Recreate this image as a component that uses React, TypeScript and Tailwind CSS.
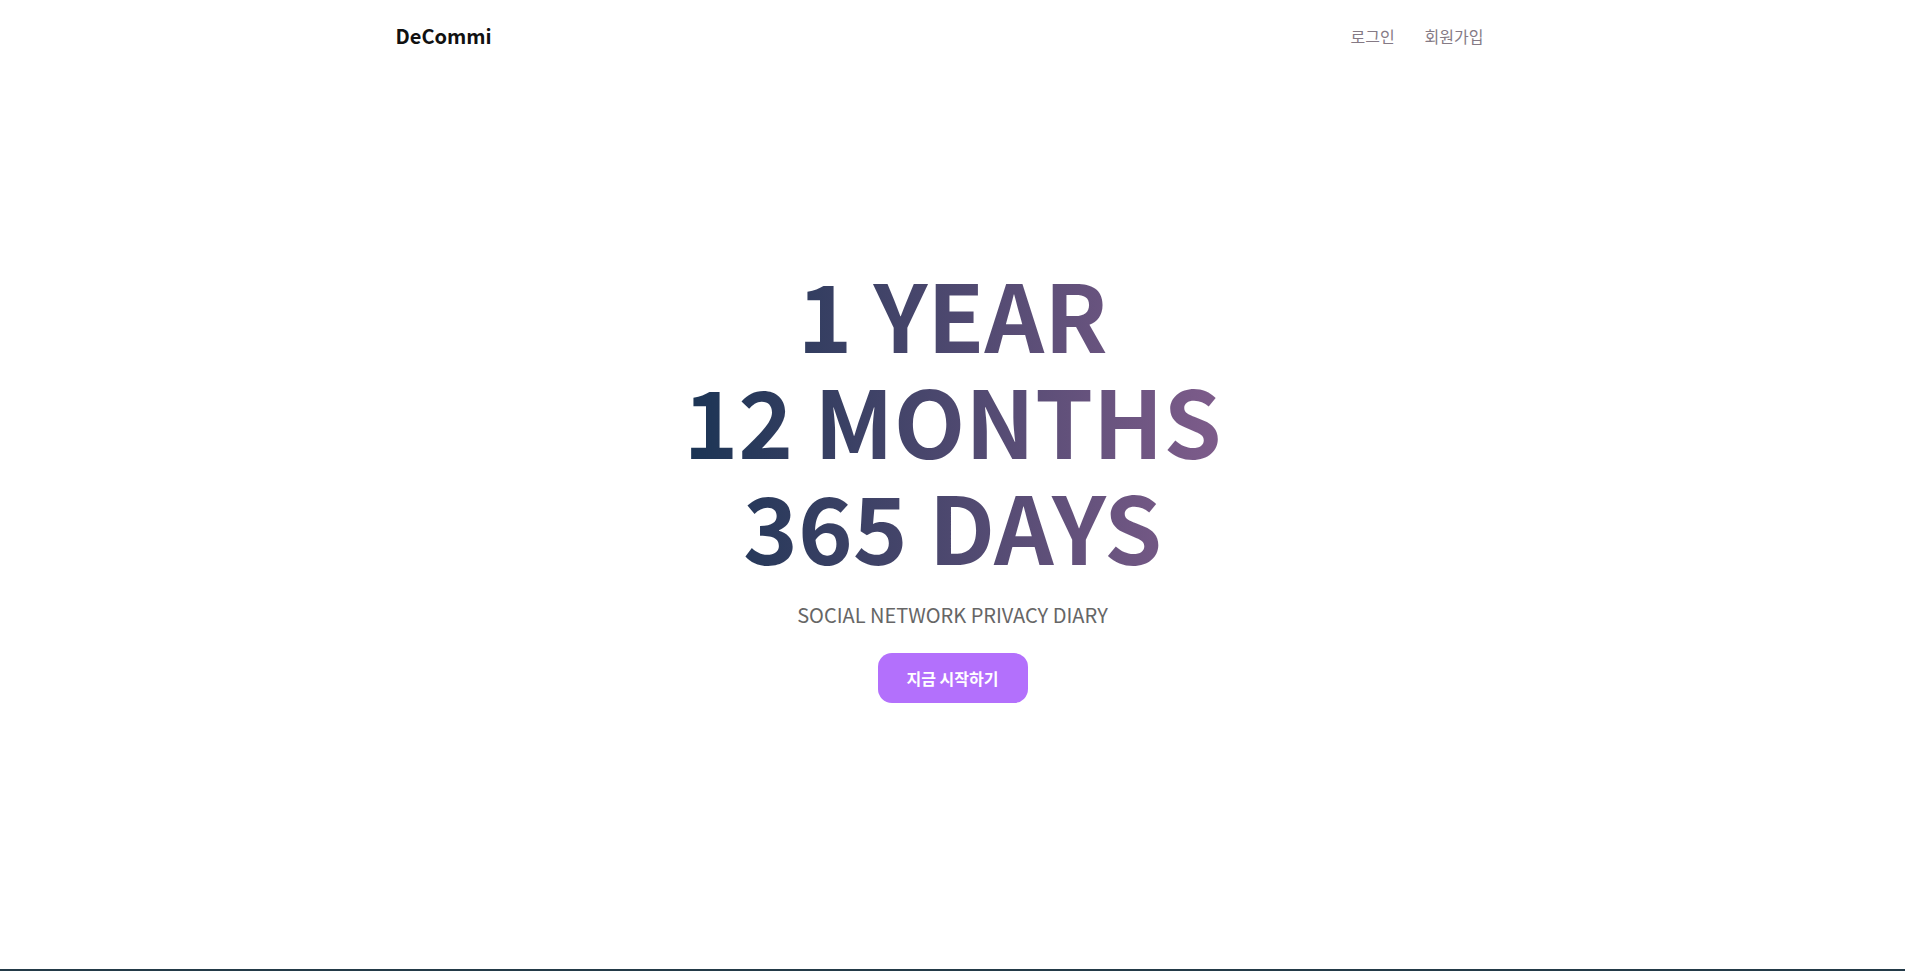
import React from 'react';

const font = { fontFamily: '"Noto Sans CJK KR", "Noto Sans", sans-serif' };

const Header: React.FC = () => (
  <header className="w-full h-[72px] shrink-0">
    <div className="max-w-[1114px] mx-auto h-full flex items-center justify-between">
      <span className="text-[20px] font-bold text-[#111]">DeCommi</span>
      <nav className="flex items-center gap-[30px] pr-[26px] text-[16px] text-[#857a85]">
        <a href="#login" className="hover:text-[#b370fc] transition">로그인</a>
        <a href="#signup" className="hover:text-[#b370fc] transition">회원가입</a>
      </nav>
    </div>
  </header>
);

const Hero: React.FC = () => (
  <section className="flex-1 flex flex-col items-center justify-center pb-[78px]">
    <h1 className="inline-block text-center text-[93px] leading-[106px] font-bold uppercase bg-gradient-to-r from-[#1a3454] to-[#7e5c8b] bg-clip-text text-transparent">
      1 YEAR
      <br />
      12 MONTHS
      <br />
      365 DAYS
    </h1>
    <p className="mt-[22px] text-[20px] text-[#666] uppercase">Social Network Privacy Diary</p>
    <button className="mt-[23px] w-[150px] h-[50px] rounded-[14px] bg-[#b370fc] text-white text-[16px] font-bold hover:bg-[#a35cf5] transition">
      지금 시작하기
    </button>
  </section>
);

export default function App() {
  return (
    <div className="min-h-screen h-screen flex flex-col bg-white" style={font}>
      <Header />
      <Hero />
      <div className="h-[2px] w-full bg-[#233a48] shrink-0" />
    </div>
  );
}
